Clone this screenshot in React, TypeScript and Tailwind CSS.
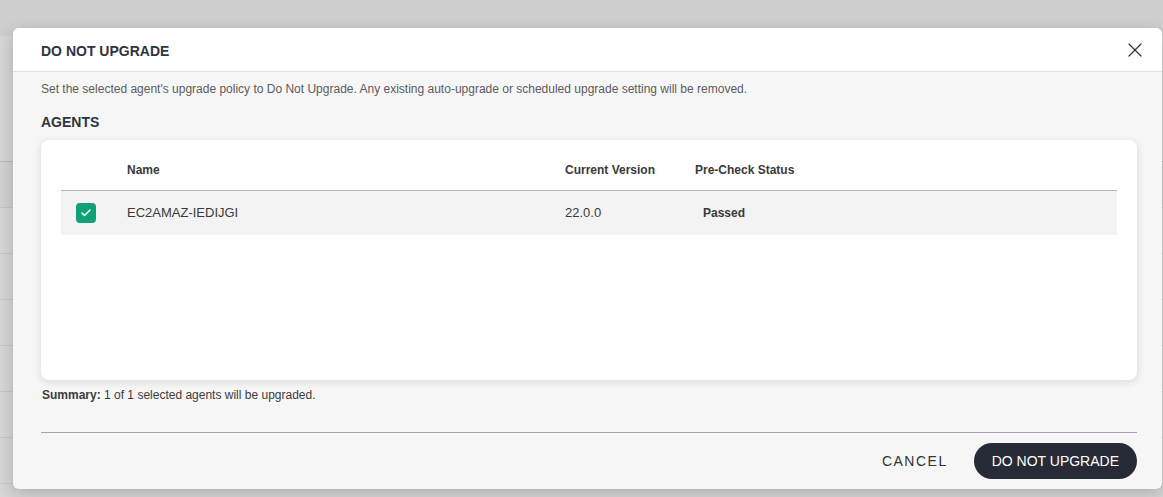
import React from 'react';
import { X, Check } from 'lucide-react';

// ---------------------------------------------------------------------------
// Data
// ---------------------------------------------------------------------------

interface Agent {
  name: string;
  version: string;
  status: string;
}

const agents: Agent[] = [{ name: 'EC2AMAZ-IEDIJGI', version: '22.0.0', status: 'Passed' }];

const font = { fontFamily: '"Liberation Sans", Arial, sans-serif' };

// ---------------------------------------------------------------------------
// Dimmed page behind the dialog
// ---------------------------------------------------------------------------

function BackdropPage() {
  return (
    <div className="flex h-full flex-col">
      <div className="h-[36px] bg-[#cfcfcf]" />
      <div className="flex flex-1 flex-col bg-[#d6d6d6]">
        <div className="h-[126px] border-b border-[#b9b9b9]" />
        <div className="h-[46px] border-b border-[#c6c6c6] bg-[#d1d1d1]" />
        {[0, 1, 2, 3, 4, 5].map((i) => (
          <div key={i} className="h-[46px] border-b border-[#c6c6c6]" />
        ))}
      </div>
    </div>
  );
}

// ---------------------------------------------------------------------------
// Agents table
// ---------------------------------------------------------------------------

function AgentsTable() {
  return (
    <div className="h-[240px] rounded-lg bg-white px-[20px] pt-[10px] shadow-[0_2px_8px_rgba(0,0,0,0.12)]">
      <div className="flex h-[41px] items-center border-b border-[#b4b8c0] text-[12px] font-bold text-[#3a3a3a]">
        <div className="w-[66px]" />
        <div className="w-[438px]">Name</div>
        <div className="w-[130px]">Current Version</div>
        <div>Pre-Check Status</div>
      </div>
      {agents.map((a) => (
        <div key={a.name} className="flex h-[44px] items-center bg-[#f3f3f3] text-[#3a3a3a]">
          <div className="w-[66px] pl-[15px]">
            <span className="flex h-[20px] w-[20px] items-center justify-center rounded-[4px] bg-[#12a07b]">
              <Check className="h-[12px] w-[12px] text-white" strokeWidth={3} />
            </span>
          </div>
          <div className="w-[438px] text-[13px]">{a.name}</div>
          <div className="w-[130px] text-[13px]">{a.version}</div>
          <div className="pl-[8px] text-[12px] font-bold">{a.status}</div>
        </div>
      ))}
    </div>
  );
}

// ---------------------------------------------------------------------------
// Dialog
// ---------------------------------------------------------------------------

function DoNotUpgradeDialog() {
  return (
    <div
      className="absolute left-[13px] top-[28px] flex h-[461px] w-[1149px] flex-col overflow-hidden rounded-md bg-[#f6f6f6] shadow-[0_4px_16px_rgba(0,0,0,0.2)]"
      style={font}
    >
      {/* Header */}
      <div className="flex h-[44px] shrink-0 items-center justify-between border-b border-[#e2e2e2] bg-white pl-[28px] pr-[15px] pt-[3px]">
        <h2 className="text-[14px] font-bold text-[#2f3441]">DO NOT UPGRADE</h2>
        <X className="-mt-[3px] h-[24px] w-[24px] text-[#333]" strokeWidth={1.2} />
      </div>

      {/* Body */}
      <div className="flex flex-1 flex-col pl-[28px] pr-[25px]">
        <p className="mt-[10px] text-[12px] leading-[14px] text-[#5c5c5c]">
          Set the selected agent's upgrade policy to Do Not Upgrade. Any existing auto-upgrade or scheduled upgrade
          setting will be removed.
        </p>
        <h3 className="mt-[18px] text-[14px] font-bold leading-[16px] text-[#2f3441]">AGENTS</h3>
        <div className="mt-[10px]">
          <AgentsTable />
        </div>
        <p className="ml-px mt-[8px] text-[12px] leading-[14px] text-[#3c3c3c]">
          <span className="font-bold">Summary:</span> 1 of 1 selected agents will be upgraded.
        </p>
        <div className="mt-[30px] border-t border-[#9ea4b4]" />

        {/* Footer */}
        <div className="mt-[10px] flex items-center justify-end gap-[26px]">
          <button className="text-[14px] tracking-[1.5px] text-[#333]">CANCEL</button>
          <button className="h-[36px] rounded-full bg-[#272a37] px-[18px] text-[14px] text-white">
            DO NOT UPGRADE
          </button>
        </div>
      </div>
    </div>
  );
}

export default function App() {
  return (
    <div className="relative h-[497px] w-[1163px] overflow-hidden bg-[#d0d0d0]">
      <BackdropPage />
      <DoNotUpgradeDialog />
    </div>
  );
}
